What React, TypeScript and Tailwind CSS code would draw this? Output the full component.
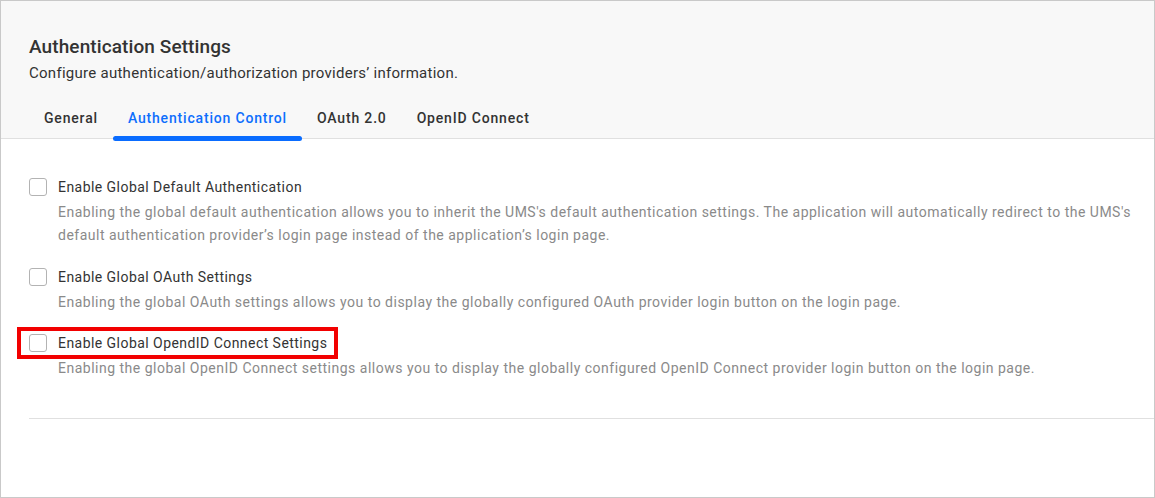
import React from "react";

const tabs = ["General", "Authentication Control", "OAuth 2.0", "OpenID Connect"];

function Option({
  label,
  desc,
  highlight,
}: {
  label: string;
  desc: string;
  highlight?: boolean;
}) {
  return (
    <div>
      <div className="relative flex w-fit items-center gap-[11px] h-[20px]">
        <span className="w-[18px] h-[18px] rounded-[3px] border border-[#b3b3b3] bg-white shrink-0" />
        <span className="text-[14px] leading-[20px] text-[#333] tracking-[0.45px]">{label}</span>
        {highlight && (
          <span className="absolute -left-[12px] -right-[11px] -top-[6px] -bottom-[6px] border-[4px] border-[#f20000] pointer-events-none" />
        )}
      </div>
      <p className="mt-[4px] pl-[29px] text-[14px] leading-[23px] text-[#8a8a8a] tracking-[0.5px]">{desc}</p>
    </div>
  );
}

export default function App() {
  return (
    <div className="w-[1155px] h-[498px] border border-[#c9c9c9] bg-white overflow-hidden font-['Roboto',sans-serif]">
      <div className="bg-[#f8f8f8] border-b border-[#e0e0e0] pl-[28px] pt-[34px]">
        <h1 className="text-[19px] leading-[24px] font-medium text-[#333] tracking-[0.1px]">Authentication Settings</h1>
        <p className="mt-[4px] text-[15px] leading-[20px] text-[#333] tracking-[0.27px]">
          Configure authentication/authorization providers’ information.
        </p>
        <div className="flex mt-[25px]">
          {tabs.map((t, i) => (
            <div
              key={t}
              className={
                "relative px-[15px] pb-[10px] text-[14px] leading-[20px] font-medium tracking-[0.82px] " +
                (i === 1 ? "text-[#0d6efd]" : "text-[#333]")
              }
            >
              {t}
              {i === 1 && (
                <span className="absolute left-0 right-0 -bottom-[3px] h-[5px] rounded-full bg-[#0a6cff]" />
              )}
            </div>
          ))}
        </div>
      </div>
      <div className="pl-[28px] pt-[38px]">
        <div className="flex flex-col gap-[19.5px]">
          <Option
            label="Enable Global Default Authentication"
            desc="Enabling the global default authentication allows you to inherit the UMS's default authentication settings. The application will automatically redirect to the UMS's default authentication provider’s login page instead of the application’s login page."
          />
          <Option
            label="Enable Global OAuth Settings"
            desc="Enabling the global OAuth settings allows you to display the globally configured OAuth provider login button on the login page."
          />
          <Option
            label="Enable Global OpendID Connect Settings"
            desc="Enabling the global OpenID Connect settings allows you to display the globally configured OpenID Connect provider login button on the login page."
            highlight
          />
        </div>
        <div className="mt-[38px] border-t border-[#e0e0e0]" />
      </div>
    </div>
  );
}
